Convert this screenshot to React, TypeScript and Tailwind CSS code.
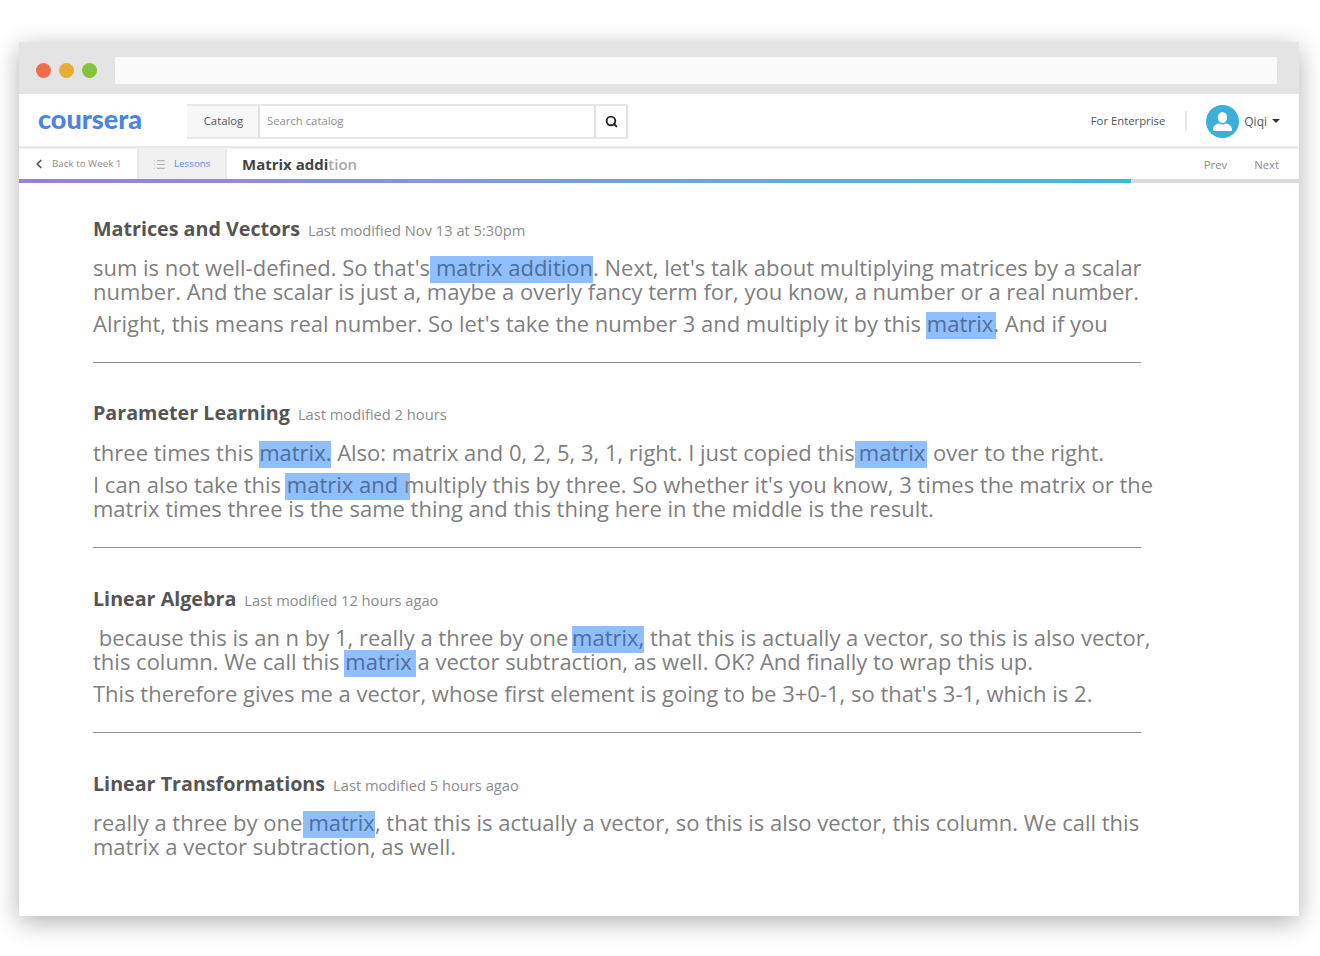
import React from 'react';
import { ChevronLeft, List, Search } from 'lucide-react';

// inline-block so the highlight can be taller than the 24px line without pushing lines apart
const Mark = ({ children, className = '' }: { children: React.ReactNode; className?: string }) => (
  <span className={`inline-block h-[27px] -mb-[4px] leading-[23px] bg-[#8fbfff] text-[#4f6f96] whitespace-pre ${className}`}>
    {children}
  </span>
);

const Line = ({ children, className = '' }: { children: React.ReactNode; className?: string }) => (
  <div className={`h-6 leading-6 whitespace-pre ${className}`}>{children}</div>
);

const Section = ({
  title,
  meta,
  children,
  divider = true,
  className = '',
  bodyClass = 'mt-[11px]',
}: {
  title: string;
  meta: string;
  children: React.ReactNode;
  divider?: boolean;
  className?: string;
  bodyClass?: string;
}) => (
  <section className={className}>
    <div className="flex items-baseline gap-2 h-[30px]">
      <h2 className="text-[19.7px] font-bold text-[#555555]">{title}</h2>
      <span className="text-[14.7px] text-[#8c8c8c]">{meta}</span>
    </div>
    <div className={`${bodyClass} text-[22px] text-[#7f7f7f]`}>{children}</div>
    {divider && <div className="h-px w-[1048px] bg-[#8f8f8f]" />}
  </section>
);

const App = () => {
  return (
    <div className="h-[956px] w-[1320px] overflow-hidden bg-white pt-[42px] pl-[19px] font-['Open_Sans',sans-serif]">
      <div className="h-[874px] w-[1280px] bg-white shadow-[0_6px_24px_rgba(0,0,0,0.3)]">
        {/* Browser chrome */}
        <div className="flex h-[52px] items-center bg-[#e4e4e4] pl-[17px] pr-[22px] pt-[4px]">
          <div className="flex gap-2">
            <span className="h-[15px] w-[15px] rounded-full bg-[#ee6f4f]" />
            <span className="h-[15px] w-[15px] rounded-full bg-[#e9ac38]" />
            <span className="h-[15px] w-[15px] rounded-full bg-[#84c43c]" />
          </div>
          <div className="ml-[18px] h-[27px] flex-1 bg-[#fafafa]" />
        </div>

        {/* Top nav */}
        <div className="flex h-[54px] items-center border-b-2 border-[#e8e8e8] pl-[19px] pr-[19px] pt-[3px]">
          <span className="w-[149px] text-[27px] leading-none font-black text-[#4a86e0] font-['Lato',sans-serif] -mt-[7px]">
            coursera
          </span>
          <div className="flex h-[35px] w-[441px] border-y-2 border-[#e8e8e8] text-[11.3px]">
            <div className="flex w-[73px] items-center justify-center border-r-2 border-[#e0e0e0] bg-[#f7f7f7] pl-[2px] pb-[1px] text-[#555555]">
              Catalog
            </div>
            <div className="flex flex-1 items-center pl-[7px] pb-[1px] text-[#8f8f8f]">Search catalog</div>
            <div className="flex w-[34px] items-center justify-center border-x-2 border-[#e0e0e0] text-[#222222]">
              <Search size={13} strokeWidth={3.5} />
            </div>
          </div>
          <div className="ml-auto flex items-center -mt-[1px]">
            <span className="ml-[1px] text-[11.3px] text-[#555555]">For Enterprise</span>
            <span className="ml-5 h-5 w-[2px] bg-[#e8e8e8]" />
            <span className="ml-[19px] flex h-[33px] w-[33px] items-center justify-center rounded-full bg-[#3bafdc]">
              <svg width="21" height="21" viewBox="0 0 21 21" fill="#ffffff">
                <ellipse cx="10.5" cy="6.5" rx="4.6" ry="5.5" />
                <path d="M1 18.5c0-4 3.5-5.500 6-6 1.800 1.200 5.200 1.200 7 0 2.500.5 6 2 6 6 0 1-.5 1.500-1.500 1.500h-16C1.500 20 1 19.500 1 18.500z" />
              </svg>
            </span>
            <span className="ml-[5px] mt-[2px] text-[12px] text-[#555555]">Qiqi</span>
            <span className="ml-[5px] h-0 w-0 border-x-[4px] border-t-[4px] border-x-transparent border-t-[#333333]" />
          </div>
        </div>

        {/* Lesson bar */}
        <div className="flex h-[31px] items-center border-t border-[#f0f0f0] pr-[20px]">
          <div className="flex h-full w-[120px] items-center border-r-2 border-[#e8e8e8] pl-[13px] text-[9.8px] text-[#8c8c8c]">
            <ChevronLeft size={14} strokeWidth={3} className="text-[#555555]" />
            <span className="ml-[6px] pt-[1px]">Back to Week 1</span>
          </div>
          <div className="flex h-full w-[88px] items-center border-r-2 border-[#e8e8e8] bg-[#f1f1f1] pl-[14px] text-[9.8px] text-[#5b8fdc]">
            <List size={13} strokeWidth={1.5} className="text-[#9a9a9a]" />
            <span className="ml-[8px] pt-[1px]">Lessons</span>
          </div>
          <div className="ml-[15px] text-[15px] font-bold text-[#444444]">
            Matrix addi<span className="text-[#a8a8a8] font-semibold">tion</span>
          </div>
          <div className="ml-auto flex gap-[27px] pt-[2px] text-[11.3px] text-[#8c8c8c]">
            <span>Prev</span>
            <span>Next</span>
          </div>
        </div>

        {/* Progress */}
        <div className="h-[4px] bg-[#e0d9d9]">
          <div className="h-full w-[1112px] bg-gradient-to-r from-[#9b7fd8] to-[#3bbad2]" />
        </div>

        {/* Results */}
        <div className="pl-[74px] pt-[31px]">
          <Section title="Matrices and Vectors" meta="Last modified Nov 13 at 5:30pm" className="h-[179px]">
            <Line>
              sum is not well-defined. So that's<Mark className="pl-[6px]">matrix addition</Mark>. Next, let's talk about multiplying matrices by a scalar
            </Line>
            <Line>number. And the scalar is just a, maybe a overly fancy term for, you know, a number or a real number.</Line>
            <Line className="mt-2">
              Alright, this means real number. So let's take the number 3 and multiply it by this <Mark className="-ml-[1px] pl-[1px] pr-[3px] -mr-[3px]">matrix</Mark>. And if you
            </Line>
            <div className="h-[27px]" />
          </Section>
          <Section title="Parameter Learning" meta="Last modified 2 hours" className="mt-[5px] h-[180px]" bodyClass="mt-[12px]">
            <Line>
              three times this <Mark>matrix.</Mark> Also: matrix and 0, 2, 5, 3, 1, right. I just copied this<Mark className="pl-[4px] pr-[2px]">matrix</Mark> over to the right.
            </Line>
            <Line className="mt-2">
              I can also take this <Mark className="-ml-[2px] pl-[2px] pr-[6px] -mr-[6px]">matrix and </Mark>multiply this by three. So whether it's you know, 3 times the matrix or the
            </Line>
            <Line>matrix times three is the same thing and this thing here in the middle is the result.</Line>
            <div className="h-[27px]" />
          </Section>
          <Section title="Linear Algebra" meta="Last modified 12 hours agao" className="mt-[6px] h-[180px]">
            <Line>
              {' '}because this is an n by 1, really a three by one <Mark className="-ml-[2px]">matrix,</Mark> that this is actually a vector, so this is also vector,
            </Line>
            <Line>
              this column. We call this <Mark className="-ml-[1px] pl-[1px] pr-[4px] -mr-[4px]">matrix</Mark> a vector subtraction, as well. OK? And finally to wrap this up.
            </Line>
            <Line className="mt-2">This therefore gives me a vector, whose first element is going to be 3+0-1, so that's 3-1, which is 2.</Line>
            <div className="h-[27px]" />
          </Section>
          <Section title="Linear Transformations" meta="Last modified 5 hours agao" divider={false} className="mt-[5px]">
            <Line>
              really a three by one<Mark className="ml-[1px] pl-[5px]">matrix</Mark>, that this is actually a vector, so this is also vector, this column. We call this
            </Line>
            <Line>matrix a vector subtraction, as well.</Line>
          </Section>
        </div>
      </div>
    </div>
  );
};

export default App;
